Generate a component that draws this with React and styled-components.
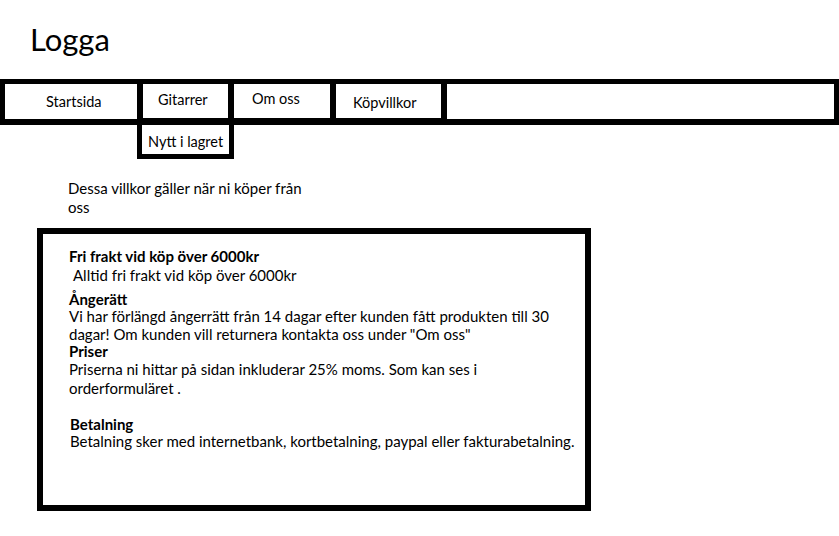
import React from 'react';
import styled, { createGlobalStyle } from 'styled-components';

const GlobalStyle = createGlobalStyle`
    body {
        margin: 0;
        background: #FFFFFF;
        font-family: Lato, "Open Sans", sans-serif;
        color: #000000;
    }
`;

const Page = styled.div`
    width: 839px;
    height: 536px;
    overflow: hidden;
`;

const Logo = styled.h1`
    margin: 0;
    padding: 19px 0 0 30px;
    height: 60px;
    box-sizing: border-box;
    font-size: 31px;
    font-weight: 400;
    line-height: 40px;
`;

const NavBar = styled.nav`
    display: flex;
    margin-top: 19px;
    height: 46px;
    box-sizing: border-box;
    border: 5px solid #000000;
    border-bottom-width: 6px;
`;

const NavItem = styled.div`
    width: ${p => p.$width}px;
    box-sizing: border-box;
    border-right: 6px solid #000000;
    border-bottom: ${p => p.$lift}px solid #000000;
    padding-top: ${p => p.$top}px;
    padding-left: ${p => p.$left}px;
    font-size: 14.5px;
    line-height: 16px;
`;

const SubMenu = styled.div`
    margin-left: 137px;
    width: 97px;
    height: 34px;
    box-sizing: border-box;
    border: 5px solid #000000;
    border-top: none;
    padding: 9px 0 0 6px;
    font-size: 14.5px;
    line-height: 16px;
`;

const Intro = styled.p`
    margin: 20px 0 0 68px;
    width: 245px;
    font-size: 15px;
    line-height: 19px;
`;

const TermsBox = styled.section`
    margin: 11px 0 0 37px;
    width: 554px;
    height: 283px;
    box-sizing: border-box;
    border: 6px solid #000000;
    padding: 13px 0 0 26px;
    font-size: 15px;
`;

const Heading = styled.div`
    font-weight: 700;
    line-height: ${p => p.$line || 18}px;
    margin-top: ${p => p.$gap || 0}px;
    padding-left: ${p => p.$indent || 0}px;
`;

const Text = styled.div`
    line-height: ${p => p.$line || 18}px;
    padding-left: ${p => p.$indent || 0}px;
    width: ${p => p.$width || 520}px;
`;

const navItems = [
    { label: 'Startsida', width: 138, top: 10, left: 41, lift: 0 },
    { label: 'Gitarrer', width: 91, top: 8, left: 15, lift: 1 },
    { label: 'Om oss', width: 102, top: 7, left: 18, lift: 1 },
    { label: 'Köpvillkor', width: 111, top: 11, left: 17, lift: 1 },
];

function App() {
    return (
        <Page>
            <GlobalStyle />
            <Logo>Logga</Logo>
            <NavBar>
                {navItems.map(item => (
                    <NavItem
                        key={item.label}
                        $width={item.width}
                        $top={item.top}
                        $left={item.left}
                        $lift={item.lift}
                    >
                        {item.label}
                    </NavItem>
                ))}
            </NavBar>
            <SubMenu>Nytt i lagret</SubMenu>
            <Intro>Dessa villkor gäller när ni köper från oss</Intro>
            <TermsBox>
                <Heading>Fri frakt vid köp över 6000kr</Heading>
                <Text $indent={4} $line={20}>Alltid fri frakt vid köp över 6000kr</Text>
                <Heading $gap={6} $line={16} $indent={-1}>Ångerätt</Heading>
                <Text $width={490}>
                    Vi har förlängd ångerrätt från 14 dagar efter kunden fått produkten till 30 dagar! Om kunden vill returnera kontakta oss under "Om oss"
                </Text>
                <Heading $line={17} $indent={-1}>Priser</Heading>
                <Text $indent={-1} $line={19} $width={420}>
                    Priserna ni hittar på sidan inkluderar 25% moms. Som kan ses i orderformuläret .
                </Text>
                <Heading $gap={17} $indent={1}>Betalning</Heading>
                <Text $indent={1} $line={16}>
                    Betalning sker med internetbank, kortbetalning, paypal eller fakturabetalning.
                </Text>
            </TermsBox>
        </Page>
    );
}

export default App;
